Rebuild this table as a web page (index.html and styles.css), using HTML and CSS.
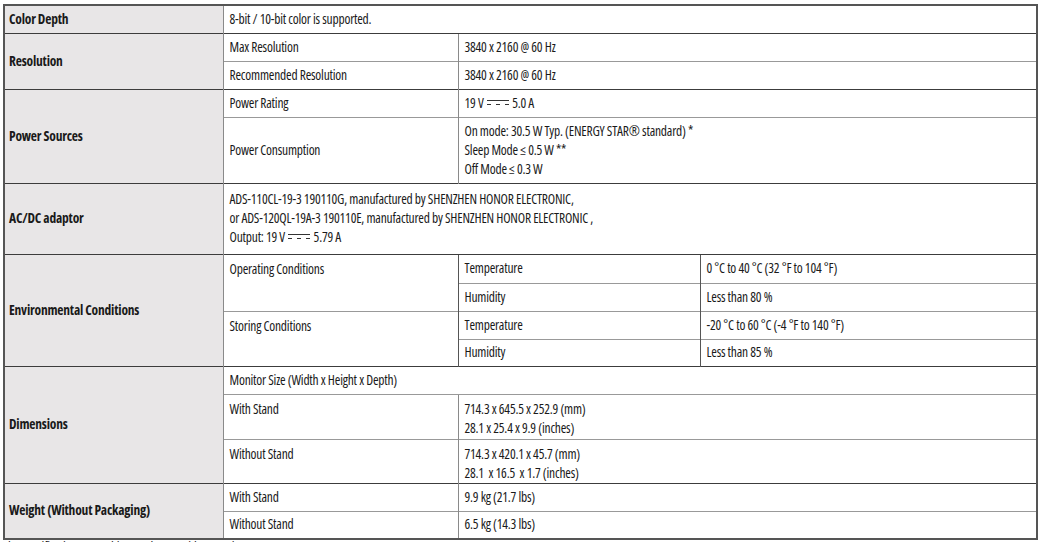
FILE: index.html
```html
<!DOCTYPE html>
<html lang="en">
<head>
<meta charset="utf-8">
<title>Specifications</title>
<link rel="stylesheet" href="styles.css">
</head>
<body>
<div class="page">
<table class="spec">
  <colgroup>
    <col class="c1"><col class="c2"><col class="c3"><col class="c4">
  </colgroup>
  <tbody>
    <tr class="h28 grp">
      <th>Color Depth</th>
      <td colspan="3">8-bit / 10-bit color is supported.</td>
    </tr>
    <tr class="h28 grp">
      <th rowspan="2">Resolution</th>
      <td>Max Resolution</td>
      <td colspan="2">3840 x 2160 @ 60 Hz</td>
    </tr>
    <tr class="h28 sub">
      <td>Recommended Resolution</td>
      <td colspan="2">3840 x 2160 @ 60 Hz</td>
    </tr>
    <tr class="h28 grp">
      <th rowspan="2">Power Sources</th>
      <td>Power Rating</td>
      <td colspan="2">19 V <span class="dc"></span> 5.0 A</td>
    </tr>
    <tr class="h66 sub">
      <td>Power Consumption</td>
      <td colspan="2" class="lines">On mode: 30.5 W Typ. (ENERGY STAR® standard) *<br>Sleep Mode ≤ 0.5 W **<br>Off Mode ≤ 0.3 W</td>
    </tr>
    <tr class="h71 grp">
      <th>AC/DC adaptor</th>
      <td colspan="3" class="lines">ADS-110CL-19-3 190110G, manufactured by SHENZHEN HONOR ELECTRONIC,<br>or ADS-120QL-19A-3 190110E, manufactured by SHENZHEN HONOR ELECTRONIC ,<br>Output: 19 V <span class="dc"></span> 5.79 A</td>
    </tr>
    <tr class="h29 grp">
      <th rowspan="4">Environmental Conditions</th>
      <td rowspan="2" class="top">Operating Conditions</td>
      <td class="dark-l">Temperature</td>
      <td class="dark-l">0 °C to 40 °C (32 °F to 104 °F)</td>
    </tr>
    <tr class="h28 sub">
      <td class="dark-l">Humidity</td>
      <td class="dark-l">Less than 80 %</td>
    </tr>
    <tr class="h28 sub">
      <td rowspan="2" class="top">Storing Conditions</td>
      <td class="dark-l">Temperature</td>
      <td class="dark-l">-20 °C to 60 °C (-4 °F to 140 °F)</td>
    </tr>
    <tr class="h27 sub">
      <td class="dark-l">Humidity</td>
      <td class="dark-l">Less than 85 %</td>
    </tr>
    <tr class="h28 grp">
      <th rowspan="3">Dimensions</th>
      <td colspan="3">Monitor Size (Width x Height x Depth)</td>
    </tr>
    <tr class="h45 sub">
      <td class="top">With Stand</td>
      <td colspan="2" class="lines top">714.3 x 645.5 x 252.9 (mm)<br>28.1 x 25.4 x 9.9 (inches)</td>
    </tr>
    <tr class="h44 sub">
      <td class="top">Without Stand</td>
      <td colspan="2" class="lines top">714.3 x 420.1 x 45.7 (mm)<br>28.1&nbsp; x 16.5&nbsp; x 1.7 (inches)</td>
    </tr>
    <tr class="h28 grp">
      <th rowspan="2">Weight (Without Packaging)</th>
      <td>With Stand</td>
      <td colspan="2">9.9 kg (21.7 lbs)</td>
    </tr>
    <tr class="h28 sub">
      <td>Without Stand</td>
      <td colspan="2">6.5 kg (14.3 lbs)</td>
    </tr>
  </tbody>
</table>
<p class="note">The specifications are subject to change without notice.</p>
</div>
</body>
</html>
```
FILE: styles.css
```css
html, body {
  margin: 0;
  padding: 0;
  background: #ffffff;
}
.page {
  padding: 4px 0 0 3px;
  height: 542px;
  overflow: hidden;
  box-sizing: border-box;
  font-family: "Open Sans", "DejaVu Sans Condensed", sans-serif;
  font-stretch: 75%;
  font-size: 13.5px;
  letter-spacing: -0.2px;
  color: #1a1a1a;
}
.spec {
  border-collapse: collapse;
  table-layout: fixed;
  width: 1033px;
  border: 2px solid #555;
}
.c1 { width: 219px; }
.c2 { width: 235px; }
.c3 { width: 242px; }
.c4 { width: 337px; }
.spec th, .spec td {
  padding: 0 6px;
  text-align: left;
  vertical-align: middle;
  line-height: 19px;
  border-left: 1.5px solid #8a8a8a;
}
.spec th {
  background: #e8e6e7;
  font-weight: bold;
  padding-left: 4px;
  border-left: 2px solid #555;
}
.spec td.dark-l { border-left-color: #555; }
.spec tr.grp > * { border-top: 1.5px solid #3c3c3c; }
.spec tr.sub > * { border-top: 1.5px solid #999; }
.spec td.top { vertical-align: top; padding-top: 5px; }
.h27 { height: 27px; }
.h28 { height: 28px; }
.h29 { height: 29px; }
.h44 { height: 44px; }
.h45 { height: 45px; }
.h66 { height: 66px; }
.h71 { height: 71px; }
.dc {
  display: inline-block;
  width: 22px;
  height: 4px;
  margin: 0 1px;
  vertical-align: 3px;
  border-top: 1px solid #333;
  background: linear-gradient(90deg, #333 0 4px, transparent 4px 9px, #333 9px 13px, transparent 13px 18px, #333 18px 22px) no-repeat 0 3px / 22px 1px;
}
.note {
  margin: 0;
  padding-top: 0;
  font-size: 13.5px;
  line-height: 14px;
}
```
